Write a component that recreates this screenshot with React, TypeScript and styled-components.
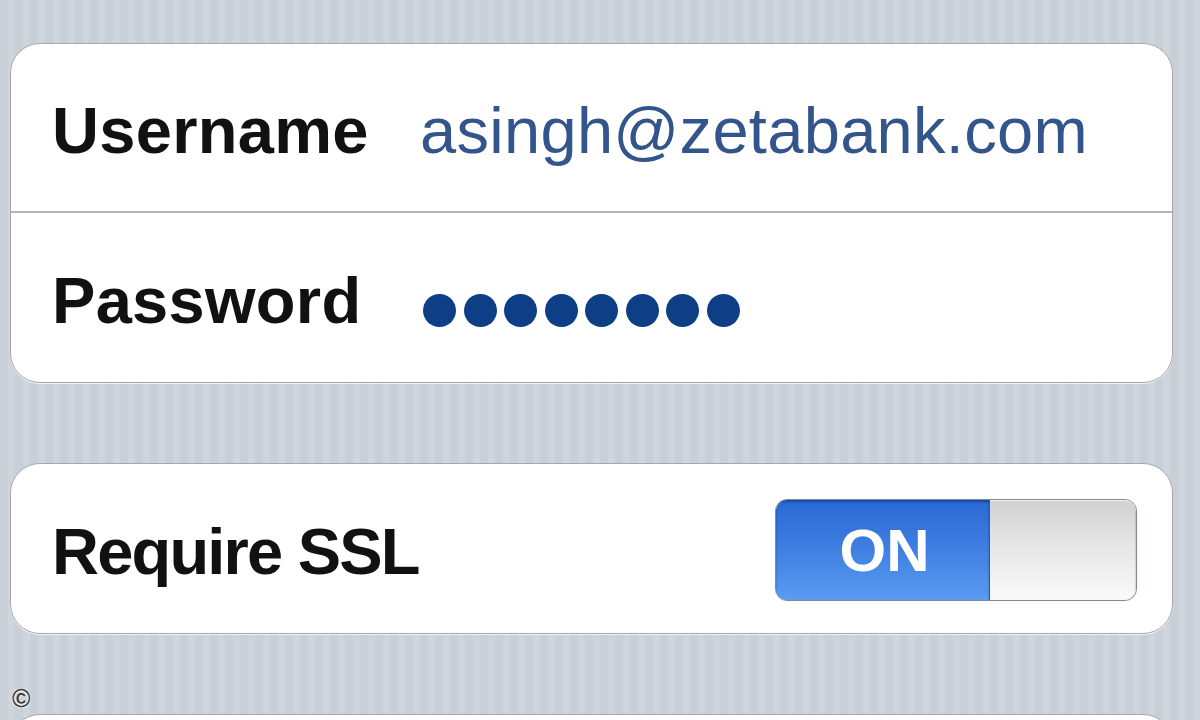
import React from 'react';
import styled, { createGlobalStyle } from 'styled-components';

const GlobalStyle = createGlobalStyle`
  html, body {
    margin: 0;
    padding: 0;
  }
  body {
    font-family: "Liberation Sans", Arial, Helvetica, sans-serif;
  }
`;

const Page = styled.div`
  position: relative;
  width: 1200px;
  height: 720px;
  overflow: hidden;
  box-sizing: border-box;
  padding: 43px 27px 0 10px;
  display: flex;
  flex-direction: column;
  gap: 80px;
  background-color: #c9d0d8;
  background-image: repeating-linear-gradient(
    90deg,
    #c8cfd7 0px,
    #c8cfd7 8px,
    #cfd5dc 8px,
    #cfd5dc 15px
  );
`;

const Card = styled.div`
  flex-shrink: 0;
  background: #fff;
  border: 1px solid #a3a8b0;
  border-radius: 30px;
  box-shadow: 0 1px 0 rgba(255, 255, 255, 0.7);
  overflow: hidden;
`;

const Row = styled.div<{ $divider?: boolean }>`
  display: flex;
  align-items: center;
  height: 169px;
  box-sizing: border-box;
  padding: 5px 35px 0 41px;
  border-bottom: ${p => (p.$divider ? '2px solid #b3b5b8' : 'none')};
  white-space: nowrap;
`;

const Label = styled.div<{ $tight?: boolean }>`
  width: 368px;
  flex-shrink: 0;
  font-size: 65px;
  font-weight: bold;
  color: #111;
  letter-spacing: ${p => (p.$tight ? '-1.8px' : '0.3px')};
`;

const Value = styled.div`
  font-size: 65px;
  color: #34558c;
  letter-spacing: 0.3px;
`;

const Dots = styled.div`
  display: flex;
  gap: 7.5px;
  margin-left: 3px;
  margin-top: 20px;
`;

const Dot = styled.span`
  width: 33px;
  height: 33px;
  border-radius: 50%;
  background: #0d3e86;
`;

const Spacer = styled.div`
  flex: 1;
`;

const Toggle = styled.div`
  display: flex;
  width: 362px;
  height: 102px;
  margin-top: -2px;
  border-radius: 12px;
  overflow: hidden;
  border: 1px solid #7f8a99;
  box-sizing: border-box;
`;

const ToggleOn = styled.div`
  width: 209px;
  display: flex;
  align-items: center;
  justify-content: center;
  background: linear-gradient(180deg, #2a67d4 0%, #3f80e2 50%, #5b9bf0 100%);
  border-right: 1px solid #2c5aa6;
  color: #fff;
  font-size: 60px;
  font-weight: bold;
  padding-left: 4px;
  box-shadow: inset 0 2px 2px rgba(10, 40, 110, 0.5);
`;

const Knob = styled.div`
  flex: 1;
  background: linear-gradient(180deg, #d0d0d0 0%, #e6e6e6 45%, #fafafa 100%);
  border-radius: 0 11px 11px 0;
  box-shadow: inset 0 1px 1px rgba(255, 255, 255, 0.8), inset -1px 0 1px rgba(0, 0, 0, 0.15);
`;

const BottomCard = styled(Card)`
  height: 120px;
`;

const Copyright = styled.span`
  position: absolute;
  left: 12px;
  top: 684px;
  font-size: 25px;
  font-weight: bold;
  color: #3a3a3a;
  text-shadow: 0 0 2px #fff, 0 0 2px #fff;
`;

export default function App() {
  return (
    <>
      <GlobalStyle />
      <Page>
        <Card>
          <Row $divider>
            <Label>Username</Label>
            <Value>asingh@zetabank.com</Value>
          </Row>
          <Row>
            <Label>Password</Label>
            <Dots>
              {Array.from({ length: 8 }).map((_, i) => (
                <Dot key={i} />
              ))}
            </Dots>
          </Row>
        </Card>
        <Card>
          <Row>
            <Label $tight>Require SSL</Label>
            <Spacer />
            <Toggle>
              <ToggleOn>ON</ToggleOn>
              <Knob />
            </Toggle>
          </Row>
        </Card>
        <BottomCard />
        <Copyright>©</Copyright>
      </Page>
    </>
  );
}
